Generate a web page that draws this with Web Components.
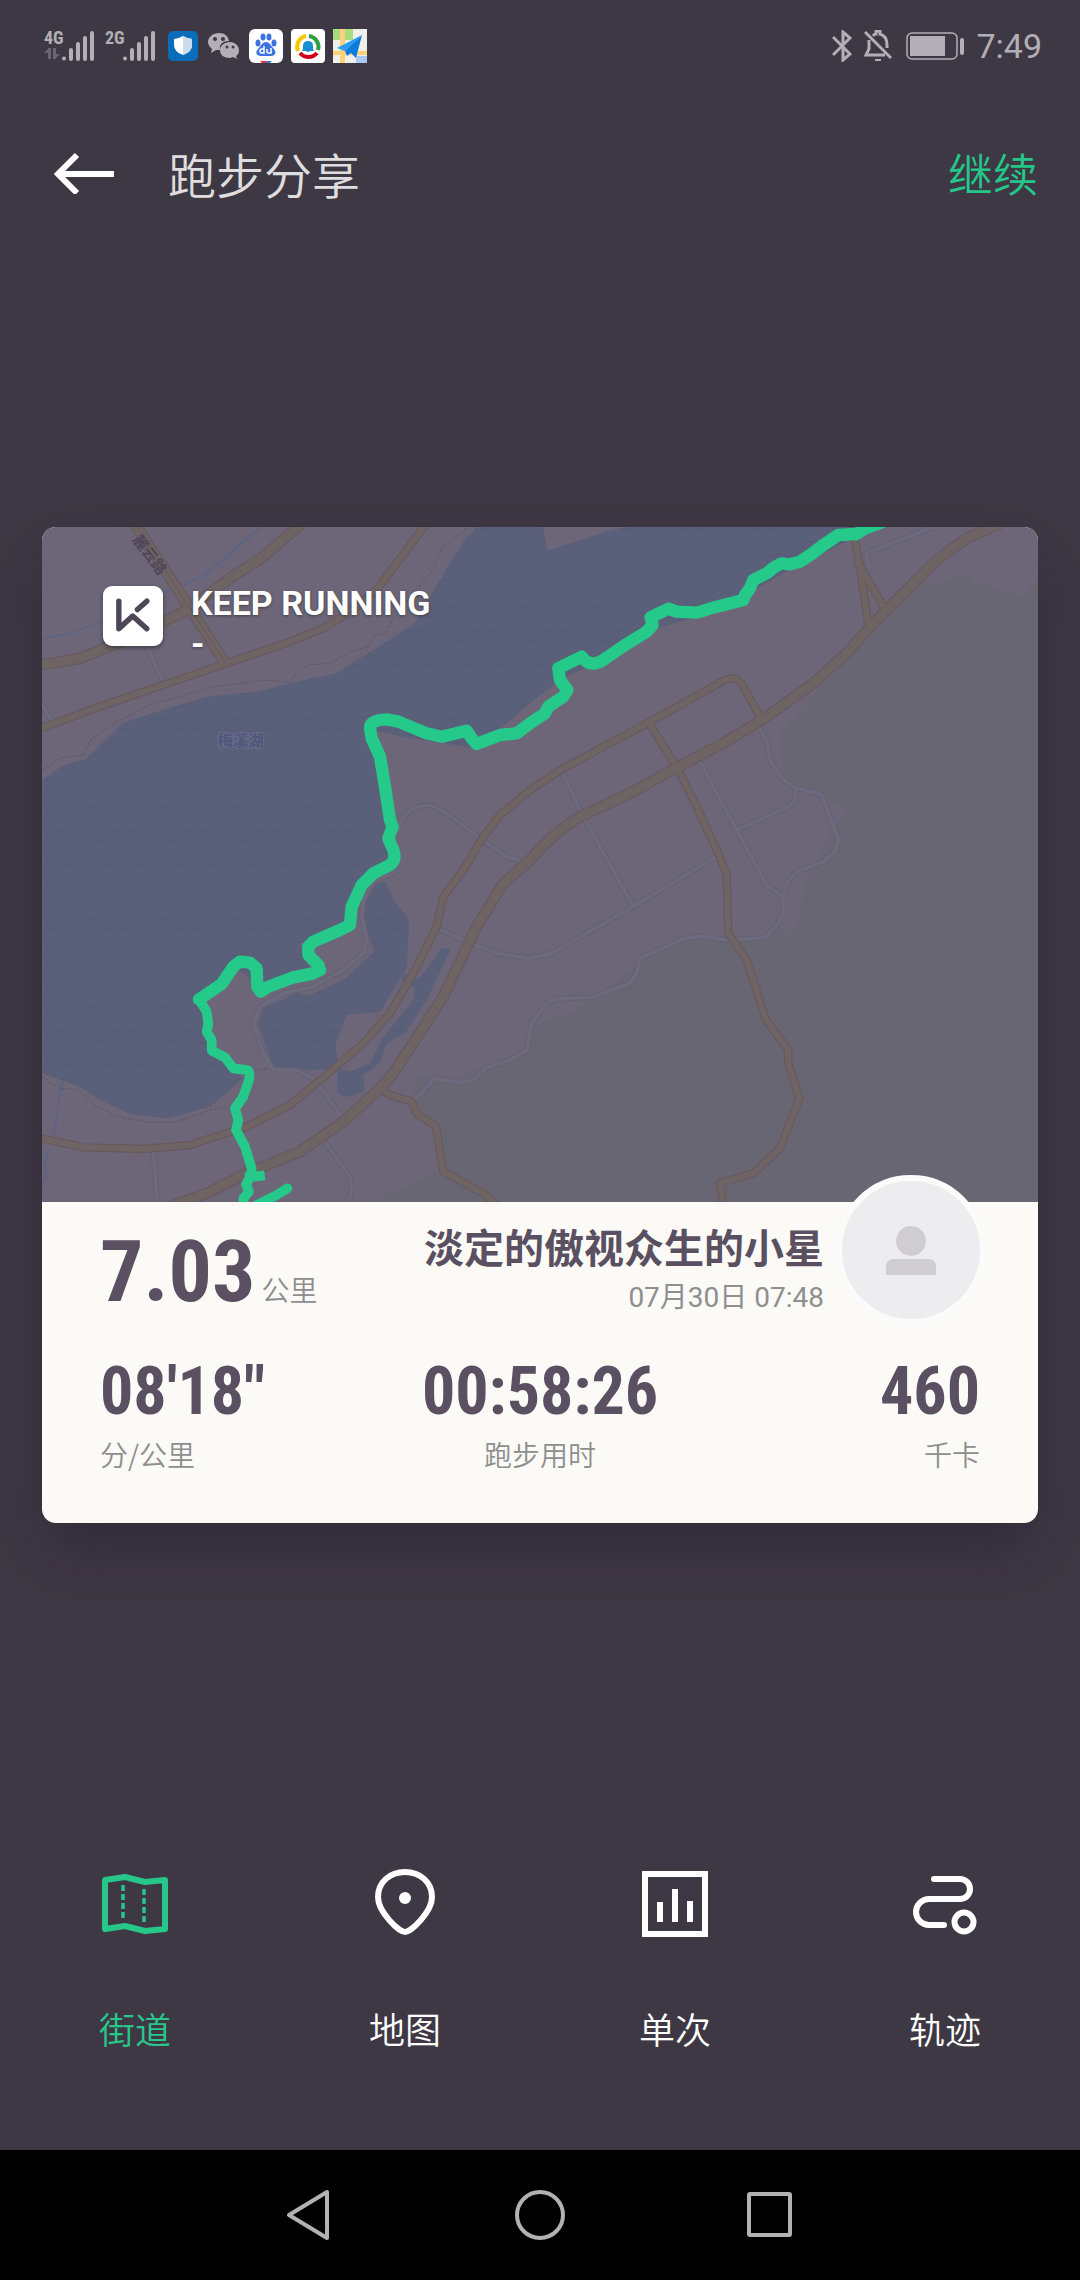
<!DOCTYPE html>
<html lang="zh-CN">
<head>
<meta charset="utf-8">
<meta name="viewport" content="width=device-width, initial-scale=1">
<title>跑步分享</title>
<style>
    html, body {
        margin: 0;
        background: #3e3844;
    }

    body {
        font-family: 'Noto Sans CJK SC', Roboto, sans-serif;
        color: #fff;
    }
</style>
</head>
<body>
<share-page>
    <status-bar slot="top" time="7:49"></status-bar>
    <page-header slot="top" action="继续">跑步分享</page-header>
    <run-card distance="7.03" unit="公里">
        <run-map slot="map"></run-map>
        <span slot="name">淡定的傲视众生的小星</span>
        <span slot="date">07月30日 07:48</span>
        <run-stat slot="stats" value="08'18&quot;" align="left">分/公里</run-stat>
        <run-stat slot="stats" value="00:58:26" align="center">跑步用时</run-stat>
        <run-stat slot="stats" value="460" align="right">千卡</run-stat>
    </run-card>
    <style-tabs slot="bottom">
        <style-tab icon="street" active>街道</style-tab>
        <style-tab icon="pin">地图</style-tab>
        <style-tab icon="chart">单次</style-tab>
        <style-tab icon="track">轨迹</style-tab>
    </style-tabs>
    <system-nav slot="bottom"></system-nav>
</share-page>

<script>
class SharePage extends HTMLElement {
    constructor() {
        super();
        this.attachShadow({ mode: 'open' });
    }

    connectedCallback() {
        this.shadowRoot.innerHTML = `
            <style>
                :host {
                    display: flex;
                    flex-direction: column;
                    min-height: 100vh;
                }

                main {
                    flex: 1;
                    display: flex;
                    flex-direction: column;
                    justify-content: center;
                    padding: 0 42px;
                }
            </style>
            <slot name="top"></slot>
            <main><slot></slot></main>
            <slot name="bottom"></slot>
        `;
    }
}

class StatusBar extends HTMLElement {
    constructor() {
        super();
        this.attachShadow({ mode: 'open' });
    }

    connectedCallback() {
        const time = this.getAttribute('time');
        const bars = `
            <svg width="34" height="32" viewBox="0 0 34 32" stroke="#b3afb6" stroke-width="4" stroke-linecap="round">
                <path d="M3 28.500v0M10 20v9M17 14v15M24 8v21M31 3v26"/>
            </svg>`;
        this.shadowRoot.innerHTML = `
            <style>
                :host {
                    display: flex;
                    align-items: center;
                    justify-content: space-between;
                    box-sizing: border-box;
                    height: 90px;
                    padding: 2px 38px 0 44px;
                    color: #b3afb6;
                }

                .group {
                    display: flex;
                    align-items: center;
                    gap: 8px;
                }

                .signals {
                    display: flex;
                    gap: 10px;
                    margin-right: 3px;
                }

                .signal {
                    display: flex;
                }

                .net {
                    display: flex;
                    flex-direction: column;
                    width: 17px;
                    font: bold 18px/16px 'Roboto Condensed', sans-serif;
                }

                .right {
                    gap: 12px;
                }

                time {
                    font-family: Roboto, sans-serif;
                    font-size: 34px;
                    line-height: 40px;
                }

                svg {
                    display: block;
                }
            </style>
            <div class="group">
                <div class="signals">
                    <div class="signal">
                        <div class="net">4G
                            <svg width="17" height="14" viewBox="0 0 17 14" fill="#6b6571"><path d="M0 7 5 2h2v11H4V7zM9 2h3v6h4l-5 5H9z"/></svg>
                        </div>${bars}
                    </div>
                    <div class="signal"><div class="net">2G</div>${bars}</div>
                </div>
                <svg width="32" height="32" viewBox="0 0 32 32">
                    <rect x="1" y="1" width="30" height="30" rx="5" fill="#0a6dba"/>
                    <path d="M16 6q5 3 9 3v6q0 7-9 10-9-3-9-10V9q4 0 9-3z" fill="#fff"/>
                    <path d="M16 6q5 3 9 3v6q0 7-9 10z" fill="#c8deef"/>
                </svg>
                <svg width="34" height="32" viewBox="0 0 34 32" fill="#b3afb6">
                    <path d="M12 3C6 3 1 7 1 12c0 3 2 5 4 7l-1 4 5-3h4c-1-6 3-9 9-9C21 6 18 3 12 3z"/>
                    <path d="M23 12c-6 0-10 4-10 8 0 5 4 8 10 8l3-1 4 2-1-3c2-1 3-3 3-6 0-4-4-8-9-8z"/>
                    <g fill="#3e3844"><circle cx="8" cy="9" r="2"/><circle cx="16" cy="9" r="2"/><circle cx="20" cy="17" r="1.500"/><circle cx="26" cy="17" r="1.500"/></g>
                </svg>
                <svg width="34" height="34" viewBox="0 0 34 34">
                    <rect width="34" height="34" rx="6" fill="#fff"/>
                    <g fill="#3d73e0">
                        <ellipse cx="9" cy="14" rx="2.500" ry="3.500"/><ellipse cx="14" cy="8" rx="2.500" ry="3.500"/>
                        <ellipse cx="20" cy="8" rx="2.500" ry="3.500"/><ellipse cx="25" cy="14" rx="2.500" ry="3.500"/>
                        <path d="M17 13c4 0 5 4 8 7 3 4 1 7-3 7H12c-5 0-6-4-3-7 3-3 4-7 8-7z"/>
                    </g>
                    <path d="M15 17v7h-2q-2 0-2-2t2-2h2M18 20v3q0 1 2 1h2v-5" fill="none" stroke="#fff" stroke-width="1.500"/>
                    <path d="M11 32h6v2h-4z" fill="#d33"/><path d="M17 32h6l-2 2h-4z" fill="#3d73e0"/>
                </svg>
                <svg width="34" height="34" viewBox="0 0 34 34">
                    <rect width="34" height="34" rx="4" fill="#fff"/>
                    <g fill="none" stroke-width="4">
                        <path d="M7 22A11 11 0 0 1 15 7" stroke="#f7c800"/>
                        <path d="M18 7a11 11 0 0 1 9 14" stroke="#2f9e44"/>
                        <path d="M26 24a11 11 0 0 1-17 0" stroke="#d0021b"/>
                    </g>
                    <path d="M17 12q5 0 5 5v3l1 2h-4q-2 2-4 0h-4l1-2v-3q0-5 5-5z" fill="#1a8fd0"/>
                </svg>
                <svg width="34" height="34" viewBox="0 0 34 34">
                    <path d="M0 0h34v34H0z" fill="#f1efe9"/>
                    <path d="M0 0h7v11H0zM12 0h8v11h-8z" fill="#a8dc7c"/>
                    <path d="M23 27h11v7H23z" fill="#a9c8f5"/>
                    <path d="M7 0h5v34H7zM0 22h34v4H0z" fill="#fbd27a"/>
                    <path d="M29 6 4 19l8 3z" fill="#2a9cf5"/><path d="M29 6 12 22l2 5 4-3 5 5z" fill="#0b7be0"/>
                </svg>
            </div>
            <div class="group right">
                <svg width="20" height="32" viewBox="0 0 20 32" fill="none" stroke="#b3afb6" stroke-width="3">
                    <path d="m1 7 17 17-7 6V2l7 6L1 25"/>
                </svg>
                <svg width="28" height="32" viewBox="0 0 28 32" fill="none" stroke="#b3afb6" stroke-width="3">
                    <path d="M5 10v9l-3 6h19M9 6q1-2 3-2V1h4v3q7 2 7 11v3M1 2l26 26"/>
                    <path d="M11 30h6" stroke-width="2"/>
                </svg>
                <svg width="60" height="28" viewBox="0 0 60 28">
                    <rect x="3" y="1" width="50" height="26" rx="5" fill="none" stroke="#b3afb6" stroke-width="1.500"/>
                    <rect x="6" y="4" width="35" height="20" fill="#b3afb6"/>
                    <rect x="56" y="6" width="4" height="17" rx="2" fill="#b3afb6"/>
                </svg>
                <time>${time}</time>
            </div>
        `;
    }
}

class PageHeader extends HTMLElement {
    constructor() {
        super();
        this.attachShadow({ mode: 'open' });
    }

    connectedCallback() {
        const action = this.getAttribute('action');
        this.shadowRoot.innerHTML = `
            <style>
                :host {
                    display: flex;
                    align-items: center;
                    box-sizing: border-box;
                    height: 168px;
                    padding: 0 42px 2px 54px;
                }

                button {
                    background: none;
                    border: none;
                    padding: 0;
                    font: inherit;
                    cursor: pointer;
                }

                h1 {
                    flex: 1;
                    margin: 0 0 0 54px;
                    font-size: 48px;
                    line-height: 72px;
                    font-weight: 350;
                    color: #dedede;
                }

                .action {
                    font-size: 45px;
                    line-height: 72px;
                    font-weight: 350;
                    color: #24c789;
                }

                svg {
                    display: block;
                }
            </style>
            <button aria-label="返回">
                <svg width="60" height="42" viewBox="0 0 60 42" fill="none" stroke="#fff" stroke-width="6">
                    <path d="M60 22H5M23 3 4 22l19 19"/>
                </svg>
            </button>
            <h1><slot></slot></h1>
            <button class="action">${action}</button>
        `;
    }
}

class RunCard extends HTMLElement {
    constructor() {
        super();
        this.attachShadow({ mode: 'open' });
    }

    connectedCallback() {
        const distance = this.getAttribute('distance');
        const unit = this.getAttribute('unit');
        this.shadowRoot.innerHTML = `
            <style>
                :host {
                    display: block;
                    border-radius: 14px;
                    background: #fbfaf6;
                    color: #5a5061;
                    box-shadow: 0 28px 60px rgba(30, 24, 36, .35);
                }

                .summary {
                    display: flex;
                    align-items: flex-start;
                    padding: 0 52px 0 58px;
                }

                .distance {
                    flex: 1;
                    display: flex;
                    align-items: baseline;
                    gap: 6px;
                    padding-top: 27px;
                }

                .distance strong {
                    font: bold 86px/86px 'Roboto Condensed', sans-serif;
                }

                .distance span {
                    font-size: 28px;
                    line-height: 36px;
                    font-weight: 350;
                    color: #8e8e8e;
                }

                .user {
                    display: flex;
                    flex-direction: column;
                    align-items: flex-end;
                    gap: 10px;
                    padding: 20px 12px 0 0;
                }

                .name {
                    font-size: 40px;
                    line-height: 48px;
                    font-weight: bold;
                }

                .date {
                    font-family: Roboto, 'Noto Sans CJK SC', sans-serif;
                    font-size: 28px;
                    line-height: 36px;
                    color: #8e8e8e;
                }

                .avatar {
                    position: relative;
                    box-sizing: border-box;
                    width: 150px;
                    height: 150px;
                    margin-top: -27px;
                    border: 6px solid #fbfbfb;
                    border-radius: 50%;
                    background: #ededef;
                }

                .avatar svg {
                    display: block;
                }

                .stats {
                    display: grid;
                    grid-template-columns: 1fr auto 1fr;
                    padding: 31px 58px 51px;
                }
            </style>
            <slot name="map"></slot>
            <div class="summary">
                <div class="distance"><strong>${distance}</strong><span>${unit}</span></div>
                <div class="user">
                    <div class="name"><slot name="name"></slot></div>
                    <div class="date"><slot name="date"></slot></div>
                </div>
                <div class="avatar">
                    <svg width="138" height="138" viewBox="0 0 138 138" fill="#cfcdd2">
                        <circle cx="69" cy="60" r="15"/>
                        <path d="M44 94V86q0-8 8-8h34q8 0 8 8v8z"/>
                    </svg>
                </div>
            </div>
            <div class="stats"><slot name="stats"></slot></div>
        `;
    }
}

class RunStat extends HTMLElement {
    constructor() {
        super();
        this.attachShadow({ mode: 'open' });
    }

    connectedCallback() {
        const value = this.getAttribute('value');
        const align = this.getAttribute('align');
        this.shadowRoot.innerHTML = `
            <style>
                :host {
                    display: flex;
                    flex-direction: column;
                    gap: 8px;
                    text-align: ${align};
                }

                strong {
                    font: bold 66px/72px 'Roboto Condensed', sans-serif;
                }

                span {
                    font-size: 28px;
                    line-height: 36px;
                    font-weight: 350;
                    color: #8e8e8e;
                }
            </style>
            <strong>${value}</strong>
            <span><slot></slot></span>
        `;
    }
}

class RunMap extends HTMLElement {
    constructor() {
        super();
        this.attachShadow({ mode: 'open' });
    }

    connectedCallback() {
        const minor = `
            M350 410 402 520M36 580 65 635
            M1598 790 1660 920 1810 1190
            M1225 1255 1320 1300 1400 1330 1495 1345 1565 1330 1810 1190 2060 1040
            M2008 750 2060 850 2120 960 2210 1125 2260 1160
            M2188 655 2210 690 2220 750 2260 810 2290 830 2375 855 2425 990 2415 1025 2380 1055 2300 1085 2270 1120 2260 1160 2260 1210 2245 1240 2205 1283 2090 1290 2015 1278 1960 1287 1830 1345 1820 1390 1800 1420 1680 1463 1590 1465 1550 1480 1505 1540 1490 1620 1440 1650 1365 1675 1330 1710 1285 1718 1215 1705 1155 1770
            M2295 830V870L2280 888 2125 958
            M1105 970Q1115 890 1195 885 1230 890 1350 985L1430 1040 1475 1053
            M2520 180 2508 130 2710 51
            M1110 1080 1030 1115 1000 1170 995 1220 1010 1290 1000 1330 940 1380 850 1430 760 1450 690 1490 672 1540 700 1630 730 1680 800 1680 850 1705 940 1825
            M880 1890 960 2000 965 2040 955 2080M370 1920 382 2080`;
        const small = `
            M2195 630 2140 530Q2120 495 2085 510L1960 580 1855 638 1600 775 1500 840 1410 915 1360 980 1300 1080 1240 1160 1220 1250 1150 1390 1080 1510 1000 1600 870 1710 780 1785 650 1850 480 1905 340 1917 160 1912 36 1885
            M1860 645 1940 770 2000 890 2060 1020 2090 1090 2095 1270 2150 1350 2208 1530 2275 1620V1660L2308 1765 2250 1915 2170 1990 2070 2020 2080 2080
            M2470 70 2490 170 2515 345M2480 150 2560 290
            M1050 1735 1080 1755 1145 1775 1160 1810 1218 1850 1240 1985 1360 2050 1400 2085
            M36 655 180 600 400 525 590 460 780 395 880 355 960 305 1040 240 1190 40`;
        const major = `
            M300 20 470 280 590 465
            M36 465 150 445 300 385 470 300 600 205 700 140 815 40
            M2910 40 2810 85 2720 150 2620 250 2530 340 2450 430 2350 520 2195 630 2080 700 1935 775 1800 850 1650 920Q1580 960 1500 1050L1420 1120 1340 1250 1240 1460 1090 1690 1050 1735 940 1835 810 1925 650 1990 530 2050 420 2090`;
        this.shadowRoot.innerHTML = `
            <style>
                :host {
                    display: block;
                    position: relative;
                    aspect-ratio: 996 / 675;
                    border-radius: 14px 14px 0 0;
                    overflow: hidden;
                    background: #6c6678;
                }

                .map {
                    display: block;
                    width: 100%;
                    height: 100%;
                }

                .map path {
                    stroke-linejoin: round;
                }

                .map text {
                    font-family: 'Noto Sans CJK SC', sans-serif;
                    font-weight: bold;
                }

                /* brand lies over the map */
                .brand {
                    position: absolute;
                    top: 56px;
                    left: 61px;
                    display: flex;
                    align-items: flex-start;
                    gap: 28px;
                    color: #fff;
                    font-family: Roboto, sans-serif;
                    font-size: 34px;
                    line-height: 40px;
                    font-weight: bold;
                    text-shadow: 0 1px 3px rgba(0, 0, 0, .4);
                }

                .logo {
                    display: block;
                    margin-top: 3px;
                    border-radius: 9px;
                    background: #fff;
                    box-shadow: 0 2px 4px rgba(0, 0, 0, .4);
                }
            </style>
            <svg class="map" viewBox="36 51 2988 2025" preserveAspectRatio="xMidYMid slice" fill="none">
                <defs>
                    <pattern id="waves" width="54" height="75" patternUnits="userSpaceOnUse">
                        <path d="M0 22Q14 14 27 22T54 22M-27 60Q-13 52 0 60T27 60 54 60" stroke="#565c76" stroke-width="3" fill="none"/>
                    </pattern>
                    <g id="water">
                        <path d="M36 812 95 768 168 747 278 640 380 605 530 560 680 545 780 520 920 490 1155 340 1215 235 1300 95 1340 51H1538L1552 122 1730 65 1790 51H2520L2400 120 2290 170 2200 225 2030 310 1900 350 1700 455 1590 510 1500 580 1400 665 1340 715 1180 690 1040 665 1040 740 1060 900 1090 1000 1080 1050 1000 1110 950 1250 840 1290 808 1300 840 1380 760 1400 690 1440 660 1405 620 1375 510 1470 530 1600 610 1680 640 1705 540 1790 415 1825 300 1812 230 1780 150 1730 36 1690Z"/>
                        <path d="M1035 1122 1068 1115 1090 1170 1138 1230 1130 1370 1050 1505 950 1515 917 1600 925 1680 732 1678 705 1600 685 1540 700 1495 800 1450 840 1455 940 1410 1033 1325 1000 1230 998 1180Z"/>
                        <path d="M1235 1315 1262 1318 1190 1470 1125 1570 1070 1600 1048 1660 1000 1695 1003 1745 945 1762 920 1745 925 1675 960 1685 1020 1660 1060 1580 1150 1470 1155 1435 1115 1410 1120 1390 1165 1410Z"/>
                    </g>
                </defs>
                <path fill="#686672" d="M3024 205 2978 262 2870 225H2835L2808 195 2740 215 2670 220 2560 350 2470 430 2246 675 2268 820 2375 855 2445 900 2400 980 2360 1050 2335 1085 2300 1260 2235 1265 2200 1285H2090L2010 1280 1830 1345 1815 1370 1700 1460 1620 1510 1500 1550 1490 1630 1360 1670 1270 1710 1158 1695 1150 1760 1215 1850 1240 1985 1020 2076H3024Z"/>
                <use href="#water" fill="#5a5f7a"/>
                <use href="#water" fill="url(#waves)"/>
                <path stroke="#5a6484" stroke-width="5" d="M36 387 130 368 220 330 480 215 525 195 700 45M100 1710 85 1780 70 1880M55 1915 45 1960 50 1995 36 2025"/>
                <path stroke="#5b5668" stroke-width="3" stroke-dasharray="8 6" d="M36 780 90 745 160 735 185 685 270 630 370 580 450 560 550 530 700 510 775 515 830 465 900 460 960 425 1015 410 1030 380 1065 370 1085 330 1150 250 1205 185 1240 110 1310 55M36 1700 90 1735 140 1738 200 1790 280 1825 370 1838 440 1835 540 1800 600 1790M660 1682 720 1675"/>
                <path stroke="#656173" stroke-width="17" d="${minor}"/>
                <path stroke="#6c6a7c" stroke-width="11" d="${minor}"/>
                <path stroke="#69585f" stroke-width="25" d="${small}"/>
                <path stroke="#69585f" stroke-width="34" d="${major}"/>
                <path stroke="#6e6463" stroke-width="18" d="${small}"/>
                <path stroke="#6e6463" stroke-width="27" d="${major}"/>
                <path stroke="#69585f" stroke-width="3" d="M300 20 470 280 590 465"/>
                <text x="306" y="90" font-size="45" fill="#50475a" transform="rotate(53 306 90)">麓云路</text>
                <text x="563" y="707" font-size="46" fill="#4f587a" stroke="#666a86" stroke-width="7" paint-order="stroke">梅溪湖</text>
                <g stroke="#25c98a" stroke-linecap="round">
                    <path stroke-width="37" d="M2560 35 2505 55 2480 72 2425 75 2380 105 2345 132 2310 155 2280 163 2255 160 2235 170 2210 190 2170 210 2160 235 2145 255 2140 270 2060 290 2000 308 1940 305 1915 296 1862 322 1868 345 1850 365 1785 405 1720 450Q1680 475 1655 440L1585 475 1590 510 1612 540 1600 560 1555 590 1545 610 1500 640 1460 670 1410 675 1340 702 1325 685 1310 662 1235 680 1190 670 1105 635 1070 628Q1020 630 1020 655L1025 685 1050 740 1065 830 1080 930 1088 950 1075 985 1090 1020Q1100 1050 1080 1065L1030 1090 995 1125 965 1190 960 1245 930 1260 850 1295 835 1310V1335L865 1365 870 1380 850 1390 790 1402 715 1430 692 1445 682 1430 680 1375 660 1358 630 1355 610 1370 575 1422 507 1468"/>
                    <path stroke-width="29" d="M507 1468 530 1505 535 1540 530 1565 545 1590V1622L585 1642 610 1675 650 1680Q662 1680 657 1710L640 1760 615 1795 625 1830 618 1860 645 1910 665 1975 662 2000"/>
                    <path stroke-width="29" stroke-linecap="butt" d="M645 2003 704 1996M662 2000 648 2022 657 2045 640 2065V2090"/>
                    <path stroke-width="29" d="M680 2085 740 2055 772 2035"/>
                </g>
            </svg>
            <div class="brand">
                <svg class="logo" width="60" height="60" viewBox="0 0 178 178" fill="none" stroke="#4e4757" stroke-width="16" stroke-linejoin="round" stroke-linecap="round">
                    <path d="M47 45V127L88 89 130 127"/><path d="M130 45 102 70"/>
                </svg>
                <div>KEEP RUNNING<br>-</div>
            </div>
        `;
    }
}

class StyleTabs extends HTMLElement {
    constructor() {
        super();
        this.attachShadow({ mode: 'open' });
    }

    connectedCallback() {
        this.shadowRoot.innerHTML = `
            <style>
                :host {
                    display: grid;
                    grid-template-columns: repeat(4, 1fr);
                    padding: 76px 0 98px;
                }
            </style>
            <slot></slot>
        `;
    }
}

const tabIcons = {
    street: `
        <path d="M6 12 26 9l20 5 20-2v49L46 63 26 58 6 61z" stroke-linejoin="round"/>
        <path d="M24 17v34M45 21v34" stroke-width="3.500" stroke-dasharray="6 3"/>`,
    pin: `
        <path d="M36 64C30 64 9 44 9 29 9 14 21 4 36 4s27 10 27 25c0 15-21 35-27 35z"/>
        <circle cx="36" cy="30" r="6" fill="currentColor" stroke="none"/>`,
    chart: `
        <path d="M6 6h60v60H6zM21 54V34M36 54V21M51 54V33"/>`,
    track: `
        <path d="M25 11h26a10 10 0 0 1 0 20H20a13 13 0 0 0 0 26h15" stroke-linecap="round"/>
        <circle cx="55" cy="54" r="9.500"/>`
};

class StyleTab extends HTMLElement {
    constructor() {
        super();
        this.attachShadow({ mode: 'open' });
    }

    connectedCallback() {
        const icon = tabIcons[this.getAttribute('icon')];
        this.shadowRoot.innerHTML = `
            <style>
                :host {
                    display: block;
                    color: #fff;
                }

                :host([active]) {
                    color: #27c78a;
                }

                button {
                    display: flex;
                    flex-direction: column;
                    align-items: center;
                    gap: 64px;
                    width: 100%;
                    background: none;
                    border: none;
                    padding: 0;
                    color: inherit;
                    font-family: inherit;
                    font-size: 36px;
                    line-height: 48px;
                    font-weight: 350;
                    cursor: pointer;
                }

                svg {
                    display: block;
                }
            </style>
            <button>
                <svg width="72" height="72" viewBox="0 0 72 72" fill="none" stroke="currentColor" stroke-width="6">${icon}</svg>
                <span><slot></slot></span>
            </button>
        `;
    }
}

class SystemNav extends HTMLElement {
    constructor() {
        super();
        this.attachShadow({ mode: 'open' });
    }

    connectedCallback() {
        this.shadowRoot.innerHTML = `
            <style>
                :host {
                    display: flex;
                    justify-content: center;
                    align-items: center;
                    gap: 178px;
                    height: 130px;
                    background: #000;
                }

                button {
                    background: none;
                    border: none;
                    padding: 0;
                }

                svg {
                    display: block;
                    fill: none;
                    stroke: #b2b2b2;
                    stroke-width: 4;
                    stroke-linejoin: round;
                }
            </style>
            <button aria-label="返回"><svg width="52" height="52" viewBox="0 0 52 52"><path d="M43 3v46L5 26z"/></svg></button>
            <button aria-label="主页"><svg width="52" height="52" viewBox="0 0 52 52"><circle cx="26" cy="26" r="23"/></svg></button>
            <button aria-label="最近任务"><svg width="52" height="52" viewBox="0 0 52 52"><rect x="5" y="5" width="41" height="41" rx="1"/></svg></button>
        `;
    }
}

customElements.define('share-page', SharePage);
customElements.define('status-bar', StatusBar);
customElements.define('page-header', PageHeader);
customElements.define('run-card', RunCard);
customElements.define('run-stat', RunStat);
customElements.define('run-map', RunMap);
customElements.define('style-tabs', StyleTabs);
customElements.define('style-tab', StyleTab);
customElements.define('system-nav', SystemNav);
</script>
</body>
</html>
